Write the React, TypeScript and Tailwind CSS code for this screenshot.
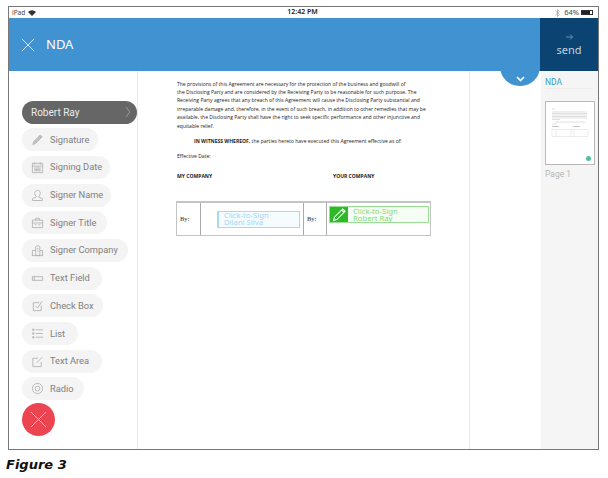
import type { ReactNode } from 'react';

const ui = { fontFamily: '"Noto Sans", sans-serif' };
const sidebarFont = { fontFamily: 'Roboto, sans-serif' };

const iconProps = {
    width: 13,
    height: 13,
    viewBox: '0 0 14 14',
    fill: 'none',
    stroke: '#aeaeae',
    strokeWidth: 0.9,
};

const tools: { label: string; width: string; icon: ReactNode }[] = [
    {
        label: 'Signature',
        width: 'w-[76px]',
        icon: (
            <svg {...iconProps}>
                <path d="M2 12.5l.8-3L10 2.200l1.900 1.900-7.200 7.300z" fill="#c4c4c4" />
                <path d="M9 3.200l1.900 1.900" />
            </svg>
        ),
    },
    {
        label: 'Signing Date',
        width: 'w-[88px]',
        icon: (
            <svg {...iconProps}>
                <path d="M1.500 2.500h11v10h-11z M1.500 5.500h11 M4 4V1.500 M10 4V1.500 M3.500 7.500h7 M3.500 9h7 M3.500 10.500h7" />
            </svg>
        ),
    },
    {
        label: 'Signer Name',
        width: 'w-[89px]',
        icon: (
            <svg {...iconProps}>
                <path d="M7 1.500c-2 0-3 1.400-3 3.200 0 1.300.6 2.400 1.500 3v1.100L1.700 10.400v2h10.600v-2L8.500 8.800V7.700c.9-.6 1.500-1.700 1.500-3 0-1.800-1-3.200-3-3.200z" />
            </svg>
        ),
    },
    {
        label: 'Signer Title',
        width: 'w-[85px]',
        icon: (
            <svg {...iconProps}>
                <path d="M1.500 4.500h11v8h-11z M5 4.500V2.500h4v2 M1.500 7.500h11 M4 9.500h2 M8 9.500h2" />
            </svg>
        ),
    },
    {
        label: 'Signer Company',
        width: 'w-[106px]',
        icon: (
            <svg {...iconProps}>
                <path d="M5 12.500V3l2.500-1.500L9.500 3v9.500z M1.500 12.500V7H5 M9.500 7h3v5.500 M1 12.500h12 M6.500 5h1.500 M6.500 7.500h1.500" />
            </svg>
        ),
    },
    {
        label: 'Text Field',
        width: 'w-[80px]',
        icon: (
            <svg {...iconProps}>
                <path d="M1.500 5h11v4h-11z M3.500 5v4" />
            </svg>
        ),
    },
    {
        label: 'Check Box',
        width: 'w-[81px]',
        icon: (
            <svg {...iconProps}>
                <path d="M11 7v5.500H2.500V4H9 M5 7.500l2 2.200L12 2.500" />
            </svg>
        ),
    },
    {
        label: 'List',
        width: 'w-[56px]',
        icon: (
            <svg {...iconProps}>
                <path d="M5 3h8 M5 7h8 M5 11h8" />
                <path d="M1.500 2h2v2h-2z M1.500 6h2v2h-2z M1.500 10h2v2h-2z" fill="#aeaeae" stroke="none" />
            </svg>
        ),
    },
    {
        label: 'Text Area',
        width: 'w-[80px]',
        icon: (
            <svg {...iconProps}>
                <path d="M11 7.500v5H2V3.500h5.500 M6 8.500l6.500-6.500" />
            </svg>
        ),
    },
    {
        label: 'Radio',
        width: 'w-[62px]',
        icon: (
            <svg {...iconProps}>
                <circle cx="7" cy="7" r="5.500" />
                <circle cx="7" cy="7" r="2.500" />
            </svg>
        ),
    },
];

const agreement = [
    'The provisions of this Agreement are necessary for the protection of the business and goodwill of',
    'the Disclosing Party and are considered by the Receiving Party to be reasonable for such purpose. The',
    'Receiving Party agrees that any breach of this Agreement will cause the Disclosing Party substantial and',
    'irreparable damage and, therefore, in the event of such breach, in addition to other remedies that may be',
    'available, the Disclosing Party shall have the right to seek specific performance and other injunctive and',
    'equitable relief.',
];

function CrossIcon({ size, color }: { size: number; color: string }) {
    return (
        <svg width={size} height={size} viewBox="0 0 16 16" fill="none" stroke={color} strokeWidth={0.9}>
            <path d="M1 1l14 14 M15 1L1 15" />
        </svg>
    );
}

function Thumbnail() {
    return (
        <div className="relative h-[64px] w-[50px] border border-[#b9b9b9] bg-white">
            <svg width="48" height="62" viewBox="0 0 48 62" fill="none" stroke="#d2d2d2" strokeWidth="0.7">
                <path d="M6 7h3 M6 10h35 M6 11.500h35 M6 13h35 M6 14.500h35 M6 16h35 M6 17.500h8 M9 20h30 M6 22h5" />
                <path d="M6 24.500h7 M27 24.500h7" stroke="#aaaaaa" />
                <path d="M6 27.500h36v7H6z M10 27.500v7 M25 27.500v7 M28 27.500v7" stroke="#e4e4e4" />
            </svg>
            <span className="absolute bottom-[3px] right-[3px] h-[5px] w-[5px] rounded-full bg-[#4fc3a1]" />
        </div>
    );
}

export default function App() {
    return (
        <div className="h-[478px] w-[608px] overflow-hidden bg-white pl-2 pt-1.5">
            <div className="relative flex h-[444px] w-[591px] flex-col border border-[#777777]" style={ui}>
                {/* status bar */}
                <div className="flex h-[11px] shrink-0 items-center px-[3px] text-[6.5px] text-[#444444]">
                    <div className="flex flex-1 items-center gap-[3px]">
                        <span>iPad</span>
                        <svg width="8" height="6" viewBox="0 0 8 6">
                            <path d="M4 6L0 2a5.700 5.700 0 0 1 8 0z" fill="#333333" />
                        </svg>
                    </div>
                    <span className="text-[7px] font-semibold text-[#222222]">12:42 PM</span>
                    <div className="flex flex-1 items-center justify-end gap-[2px] pr-[2px]">
                        <svg width="5" height="8" viewBox="0 0 5 8" fill="none" stroke="#999999" strokeWidth="0.7" className="mr-[2px]">
                            <path d="M0.500 2l4 3.500L2.500 7.500V0.500l2 2L0.500 6" />
                        </svg>
                        <span className="text-[7.5px]">64%</span>
                        <span className="flex h-[5px] w-[12px] border border-[#333333] bg-white">
                            <span className="h-full w-[8px] bg-[#222222]" />
                        </span>
                    </div>
                </div>

                {/* header */}
                <div className="flex h-[53px] shrink-0 bg-[#4192d0]">
                    <div className="flex flex-1 items-center gap-[11px] pl-[12px] text-white">
                        <CrossIcon size={14} color="#ffffff" />
                        <span className="text-[13px]">NDA</span>
                    </div>
                    <div className="flex w-[58px] flex-col items-center justify-center bg-[#0b4473] pt-[3px] text-[#c5d3df]">
                        <svg width="7" height="6" viewBox="0 0 7 6" fill="none" stroke="#8fa9bf" strokeWidth="0.7">
                            <path d="M0 3h6.500 M4 0.500L6.500 3 4 5.500" />
                        </svg>
                        <span className="mt-[2px] text-[11px] leading-[16px]">send</span>
                    </div>
                </div>

                <div className="absolute left-[491px] top-[40px] flex h-[39px] w-[40px] items-end justify-center rounded-full bg-[#4192d0] pb-[4px]">
                    <svg width="9" height="6" viewBox="0 0 9 6" fill="none" stroke="#ffffff" strokeWidth="1.6">
                        <path d="M1 1l3.500 3.500L8 1" />
                    </svg>
                </div>

                <div className="flex min-h-0 flex-1">
                    {/* tools */}
                    <div
                        className="flex w-[129px] shrink-0 flex-col gap-[4.7px] border-r border-[#e9e9e9] pl-[13px] pt-[29.5px]"
                        style={sidebarFont}
                    >
                        <div className="flex h-[23px] w-[115px] shrink-0 items-center justify-between rounded-full bg-[#666666] pl-[9px] pr-[6px] text-[10px] text-[#ededed]">
                            <span>Robert Ray</span>
                            <svg width="6" height="12" viewBox="0 0 6 12" fill="none" stroke="#a5a5a5" strokeWidth="0.8">
                                <path d="M1 1l4 5-4 5" />
                            </svg>
                        </div>
                        {tools.map((t) => (
                            <div
                                key={t.label}
                                className={`flex h-[23px] shrink-0 items-center gap-[6px] rounded-full bg-[#f4f4f4] pl-[9px] text-[9.3px] text-[#808080] ${t.width}`}
                            >
                                {t.icon}
                                <span className="whitespace-nowrap">{t.label}</span>
                            </div>
                        ))}
                        <div className="-mt-[2.5px] flex h-[33px] w-[33px] shrink-0 items-center justify-center rounded-full bg-[#ec4450]">
                            <CrossIcon size={17} color="#f6c5c8" />
                        </div>
                    </div>

                    {/* document */}
                    <div
                        className="w-[332px] shrink-0 border-r border-[#e9e9e9] pl-[39px] pt-[8.5px] text-[5.05px] leading-[8.4px] text-[#222222]"
                        style={{ fontFamily: '"Open Sans", sans-serif' }}
                    >
                        {agreement.map((line) => (
                            <div key={line} className="whitespace-nowrap">
                                {line}
                            </div>
                        ))}
                        <div className="mt-[7px] whitespace-nowrap pl-[17px]">
                            <b>IN WITNESS WHEREOF,</b> the parties hereto have executed this Agreement effective as of:
                        </div>
                        <div className="mt-[6.3px]">Effective Date:</div>
                        <div className="mt-[11.6px] flex font-bold">
                            <span className="w-[156px]">MY COMPANY</span>
                            <span>YOUR COMPANY</span>
                        </div>
                        <div className="ml-[-1px] mt-[21px] flex h-[35px] w-[255px] border border-t-2 border-[#c4c4c4] text-[#666666]">
                            <div className="flex w-[24px] items-center border-r border-[#aaaaaa] pl-[3px] font-['Liberation_Serif'] text-[6.5px] font-bold">
                                By:
                            </div>
                            <div className="flex w-[103px] items-center border-r border-[#aaaaaa] pl-[16px]">
                                <div
                                    className="flex h-[17px] w-[83px] flex-col justify-center border border-l-[2px] border-[#a8d8f5] bg-[#f6fbfe] pl-[5px] text-[7.7px] leading-[7px] text-[#a0d6f6]"
                                    style={ui}
                                >
                                    <span>Click-to-Sign</span>
                                    <span>Dilani Silva</span>
                                </div>
                            </div>
                            <div className="flex w-[23px] items-center border-r border-[#aaaaaa] pl-[3px] font-['Liberation_Serif'] text-[6.5px] font-bold">
                                By:
                            </div>
                            <div className="flex flex-1 items-start pl-[2px] pt-[3px]">
                                <div className="flex h-[17px] w-[100px] border border-[#98e094] bg-[#f6fdf5]">
                                    <div className="flex w-[18px] items-center justify-center bg-[#2eb82a]">
                                        <svg width="15" height="15" viewBox="0 0 14 14" fill="none" stroke="#ffffff" strokeWidth="1">
                                            <path d="M1.500 12.500l.8-3L10 1.800l2.200 2.200-7.700 7.700z M9 2.800l2.200 2.200" />
                                        </svg>
                                    </div>
                                    <div
                                        className="flex flex-col justify-center pl-[5px] text-[7.7px] leading-[7px] text-[#7fdc7a]"
                                        style={ui}
                                    >
                                        <span>Click-to-Sign</span>
                                        <span>Robert Ray</span>
                                    </div>
                                </div>
                            </div>
                        </div>
                    </div>

                    <div className="w-[71px] shrink-0" />

                    {/* page list */}
                    <div className="flex-1 bg-[#f5f5f5] pl-[4px] pt-[4px]" style={sidebarFont}>
                        <div className="h-[14px] w-[48px] border-b border-[#ececec] text-[8.5px] leading-[14px] text-[#3d9cc4]">NDA</div>
                        <div className="mt-[12px]">
                            <Thumbnail />
                        </div>
                        <div className="mt-[3px] text-[8.5px] text-[#b5b5b5]">Page 1</div>
                    </div>
                </div>
            </div>
            <div
                className="ml-[-2px] mt-[5px] text-[13px] font-bold italic leading-[20px] text-[#111111]"
                style={{ fontFamily: '"DejaVu Sans", sans-serif' }}
            >
                Figure 3
            </div>
        </div>
    );
}
